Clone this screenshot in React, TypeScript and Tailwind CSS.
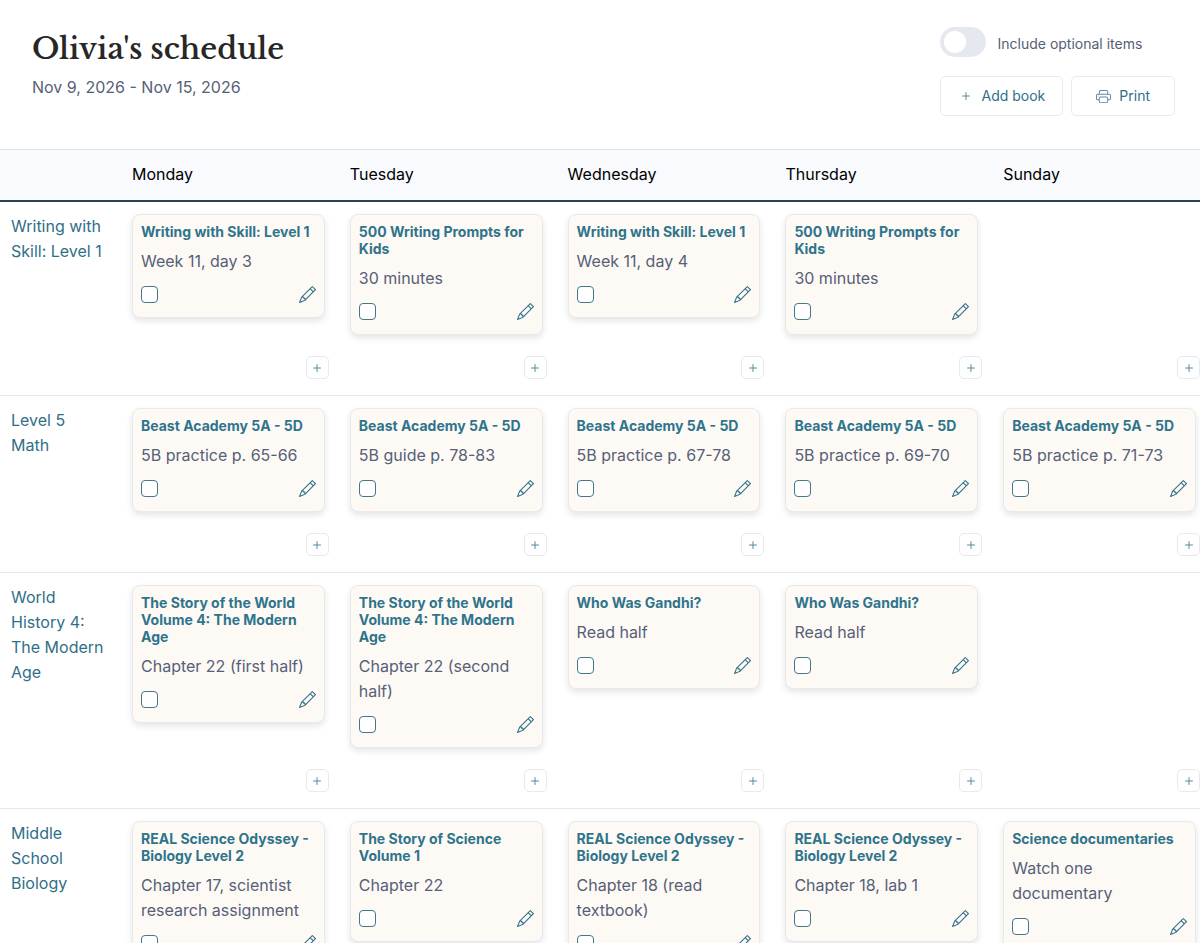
import { useState } from "react"
import { BsPencil, BsPlus, BsPrinter } from "react-icons/bs"

type Assignment = {
  book: string
  task: string
}

type Subject = {
  name: string
  days: (Assignment | null)[]
}

const weekdays = ["Monday", "Tuesday", "Wednesday", "Thursday", "Sunday"]

const subjects: Subject[] = [
  {
    name: "Writing with Skill: Level 1",
    days: [
      { book: "Writing with Skill: Level 1", task: "Week 11, day 3" },
      { book: "500 Writing Prompts for Kids", task: "30 minutes" },
      { book: "Writing with Skill: Level 1", task: "Week 11, day 4" },
      { book: "500 Writing Prompts for Kids", task: "30 minutes" },
      null,
    ],
  },
  {
    name: "Level 5 Math",
    days: [
      { book: "Beast Academy 5A - 5D", task: "5B practice p. 65-66" },
      { book: "Beast Academy 5A - 5D", task: "5B guide p. 78-83" },
      { book: "Beast Academy 5A - 5D", task: "5B practice p. 67-78" },
      { book: "Beast Academy 5A - 5D", task: "5B practice p. 69-70" },
      { book: "Beast Academy 5A - 5D", task: "5B practice p. 71-73" },
    ],
  },
  {
    name: "World History 4: The Modern Age",
    days: [
      { book: "The Story of the World Volume 4: The Modern Age", task: "Chapter 22 (first half)" },
      { book: "The Story of the World Volume 4: The Modern Age", task: "Chapter 22 (second half)" },
      { book: "Who Was Gandhi?", task: "Read half" },
      { book: "Who Was Gandhi?", task: "Read half" },
      null,
    ],
  },
  {
    name: "Middle School Biology",
    days: [
      { book: "REAL Science Odyssey - Biology Level 2", task: "Chapter 17, scientist research assignment" },
      { book: "The Story of Science Volume 1", task: "Chapter 22" },
      { book: "REAL Science Odyssey - Biology Level 2", task: "Chapter 18 (read textbook)" },
      { book: "REAL Science Odyssey - Biology Level 2", task: "Chapter 18, lab 1" },
      { book: "Science documentaries", task: "Watch one documentary" },
    ],
  },
]

const AssignmentCard = ({ book, task }: Assignment) => {
  const [done, setDone] = useState(false)

  return (
    <div className="mr-1 rounded-lg border border-[#ebe8e8] bg-[#fdfaf6] px-2 pt-2 pb-3.5 shadow-[0_3px_6px_rgba(30,40,70,0.12)]">
      <a href="#" className="block text-sm leading-[17px] font-bold text-[#2f748b]">
        {book}
      </a>
      <p className="mt-[9px] text-base leading-[25px] text-[#566076]">{task}</p>
      <div className="mt-3 flex items-center justify-between">
        <input
          type="checkbox"
          aria-label={`${task} done`}
          checked={done}
          onChange={() => setDone(!done)}
          className="size-[17px] appearance-none rounded-[4px] border border-[#47758a] bg-white checked:bg-[#2f748b]"
        />
        <button type="button" aria-label={`Edit ${task}`} className="text-[#2f6f87]">
          <BsPencil className="size-[17px]" />
        </button>
      </div>
    </div>
  )
}

const Header = () => {
  const [optional, setOptional] = useState(false)

  return (
    <header className="flex items-start justify-between pt-[27px] pr-[25px] pb-[33px] pl-8">
      <div>
        <h1 className="font-['Libre_Baskerville','Liberation_Serif',serif] text-[29px] leading-[44px] font-semibold text-[#272727]">
          Olivia's schedule
        </h1>
        <p className="mt-1 text-base leading-[25px] text-[#566076]">Nov 9, 2026 - Nov 15, 2026</p>
      </div>
      <div>
        <label className="flex items-center gap-3 text-sm leading-[22px] text-[#566076]">
          <input
            type="checkbox"
            role="switch"
            checked={optional}
            onChange={() => setOptional(!optional)}
            className="h-[30px] w-[46px] appearance-none rounded-full bg-[#e5e8ef] before:m-1 before:block before:size-[22px] before:rounded-full before:bg-white checked:bg-[#2f748b] checked:before:ml-5"
          />
          <span className="pt-1">Include optional items</span>
        </label>
        <div className="mt-[19px] flex gap-2 text-sm leading-[22px] text-[#2f6f87]">
          <button type="button" className="flex items-center gap-2 rounded-[5px] border border-[#e8eaee] px-[17px] py-2">
            <BsPlus className="size-4 text-[#5b8a9c]" />
            Add book
          </button>
          <button type="button" className="flex items-center gap-2 rounded-[5px] border border-[#e8eaee] px-6 py-2">
            <BsPrinter className="size-[15px] text-[#5b8a9c]" />
            Print
          </button>
        </div>
      </div>
    </header>
  )
}

const App = () => {
  return (
    <main className="min-h-screen bg-white font-['Inter','Liberation_Sans',sans-serif]">
      <Header />
      <div className="overflow-x-hidden">
        <table className="w-full min-w-[1210px] table-fixed border-collapse text-left">
          <colgroup>
            <col className="w-[10%]" />
            {weekdays.map((day) => (
              <col key={day} className="w-[18%]" />
            ))}
          </colgroup>
          <thead>
            <tr className="border-t border-b-2 border-t-[#dfe3e9] border-b-[#2b4257] bg-[#f8fafe]">
              <td />
              {weekdays.map((day) => (
                <th key={day} scope="col" className="px-[11px] pt-3 pb-[13px] text-base leading-[25px] font-normal text-black">
                  {day}
                </th>
              ))}
            </tr>
          </thead>
          <tbody>
            {subjects.map((subject) => (
              <tr key={subject.name} className="border-b border-[#e6e8ec]">
                <th scope="row" className="pt-3 pr-4 pl-[11px] align-top text-base leading-[25px] font-normal text-[#2f6f87]">
                  <a href="#">{subject.name}</a>
                </th>
                {subject.days.map((item, i) => (
                  <td key={weekdays[i]} className="h-px pt-3 pr-2.5 pb-4 pl-[11px] align-top">
                    <div className="flex h-full flex-col justify-between gap-[21px]">
                      {item ? <AssignmentCard {...item} /> : <div />}
                      <button
                        type="button"
                        aria-label={`Add ${subject.name} assignment on ${weekdays[i]}`}
                        className="flex size-[23px] items-center justify-center self-end rounded-[5px] border border-[#e6e9ee] text-[#5b8a9c]"
                      >
                        <BsPlus className="size-4" />
                      </button>
                    </div>
                  </td>
                ))}
              </tr>
            ))}
          </tbody>
        </table>
      </div>
    </main>
  )
}

export default App
